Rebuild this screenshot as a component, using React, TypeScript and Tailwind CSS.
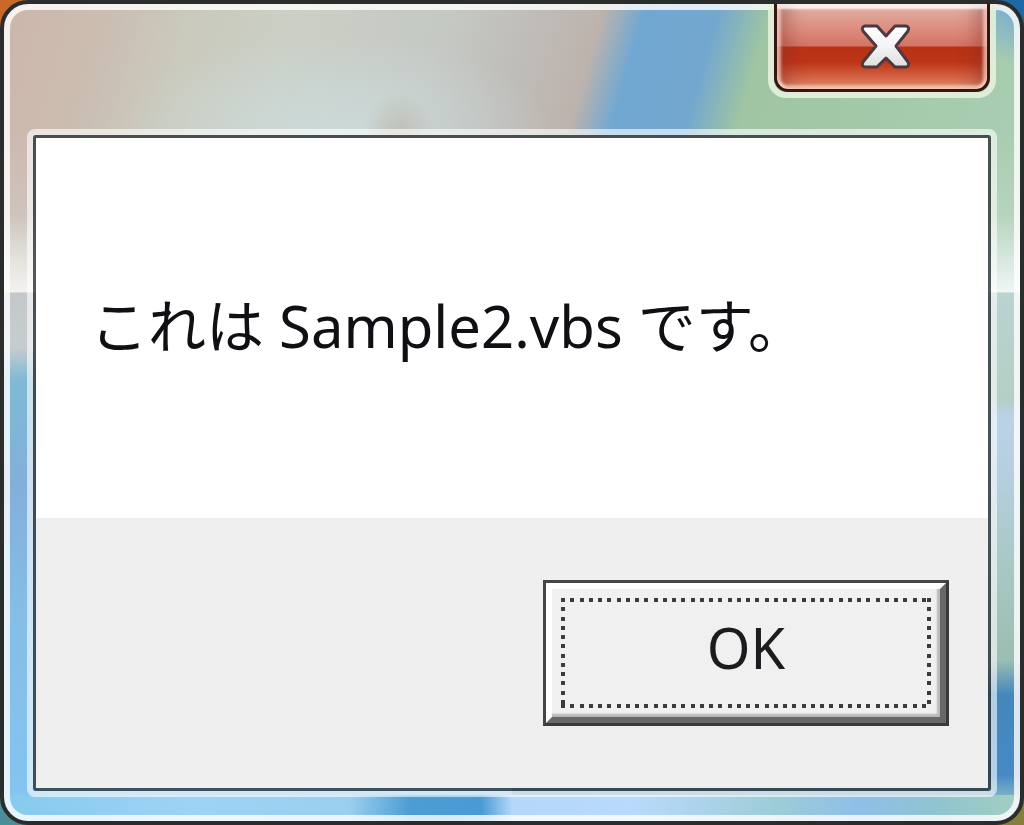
import React from "react";

function CloseGlyph() {
  return (
    <svg viewBox="0 0 54 50" className="h-[50px] w-[54px]" aria-hidden="true">
      <defs>
        <linearGradient id="glyph" x1="0" y1="0" x2="0" y2="1">
          <stop offset="0" stopColor="#ffffff" />
          <stop offset="0.5" stopColor="#f3f3f8" />
          <stop offset="1" stopColor="#e2dfd8" />
        </linearGradient>
      </defs>
      <path
        d="M6 4H18L27 14L36 4H47Q51 5 49 9L37 24L49 40Q51 44 47 45H36L27 36L18 45H6Q2 44 4 40L17 24L4 9Q2 5 6 4Z"
        fill="url(#glyph)"
        stroke="#4c3a40"
        strokeWidth="3"
        strokeLinejoin="round"
      />
    </svg>
  );
}

function TitleBar() {
  return (
    <header className="flex h-[119px] shrink-0 items-start justify-end pr-[18px]">
      <div className="-mt-1.5 rounded-b-[18px] border-x-[6px] border-b-[6px] border-[#e6f1dc]/90">
        <button
          type="button"
          aria-label="閉じる"
          className="flex h-[88px] w-[216px] items-center justify-center rounded-b-[14px] border-x-[3px] border-b-[3px] border-[#351512] bg-[linear-gradient(to_bottom,#f3d8d0_0,#e0a79d_8px,#dc8878_28px,#d37464_42px,#b93216_43px,#bd3516_58px,#d15f40_72px,#e08e70_85px)] pl-2 shadow-[inset_5px_0_3px_-1px_rgba(255,225,215,0.65),inset_-5px_0_3px_-1px_rgba(255,225,215,0.65),inset_0_-5px_3px_-1px_rgba(255,225,205,0.65),inset_0_6px_2px_-1px_rgba(255,255,255,0.75),inset_24px_0_20px_-14px_rgba(125,45,40,0.45),inset_-24px_0_20px_-14px_rgba(125,45,40,0.45)]"
        >
          <CloseGlyph />
        </button>
      </div>
    </header>
  );
}

function OkButton() {
  return (
    <button
      type="button"
      className="h-[146px] w-[406px] border-[3px] border-[#454545] border-r-[#3a3a3a] border-b-[#3a3a3a] bg-[#f0f0f0] font-['Noto_Sans','Noto_Sans_CJK_JP',sans-serif] text-[56px] leading-none text-[#1c1c20]"
    >
      <span className="flex h-full items-center justify-center border-[6px] border-t-white border-r-[#686868] border-b-[#686868] border-l-white shadow-[inset_-3px_-3px_2px_0_#b8b8b8]">
        <span className="flex h-[110px] w-[370px] items-center justify-center [background:repeating-linear-gradient(90deg,#3c3c3c_0_4px,transparent_4px_9px,#3c3c3c_9px_13px,transparent_13px_19px,#3c3c3c_19px_23px,transparent_23px_28px,#3c3c3c_28px_32px,transparent_32px_37px)_top/100%_4px_no-repeat,repeating-linear-gradient(90deg,#3c3c3c_0_4px,transparent_4px_9px,#3c3c3c_9px_13px,transparent_13px_19px,#3c3c3c_19px_23px,transparent_23px_28px,#3c3c3c_28px_32px,transparent_32px_37px)_bottom/100%_4px_no-repeat,repeating-linear-gradient(#3c3c3c_0_4px,transparent_4px_9px,#3c3c3c_9px_13px,transparent_13px_19px,#3c3c3c_19px_23px,transparent_23px_28px,#3c3c3c_28px_32px,transparent_32px_37px)_left/4px_100%_no-repeat,repeating-linear-gradient(#3c3c3c_0_4px,transparent_4px_9px,#3c3c3c_9px_13px,transparent_13px_19px,#3c3c3c_19px_23px,transparent_23px_28px,#3c3c3c_28px_32px,transparent_32px_37px)_right/4px_100%_no-repeat]">
          <span className="pb-3">OK</span>
        </span>
      </span>
    </button>
  );
}

export default function App() {
  return (
    <div className="flex min-h-screen [background:linear-gradient(#c8692a,#c8692a)_left_top/50%_50%_no-repeat,linear-gradient(#1c6aa5,#1c6aa5)_right_top/50%_50%_no-repeat,linear-gradient(#4a8f98,#4a8f98)_left_bottom/50%_50%_no-repeat,#84803c]">
      <div
        role="dialog"
        aria-describedby="message"
        className="flex flex-1 rounded-[28px] border-4 border-[#2b2d2d] bg-[#2b2d2d]"
      >
        <div className="flex flex-1 flex-col rounded-[24px] border-[6px] border-white/80 [background:radial-gradient(ellipse_70px_60px_at_100%_0,rgba(110,165,215,0.9),transparent)_right_top/120px_131px_no-repeat_border-box,radial-gradient(ellipse_36px_44px_at_396px_131px,rgba(190,188,178,0.9),transparent)_left_top/50%_131px_no-repeat_border-box,radial-gradient(ellipse_220px_100px_at_330px_131px,rgba(205,222,224,0.8),transparent)_left_top/58%_131px_no-repeat_border-box,linear-gradient(106deg,#cdb7ac_2%,#cbbdb1_10%,#cacabd_18%,#cbcfc5_28%,#c5c9c4_42%,#bfbcb8_51%,#bdb3ad_57%,#70a8d2_61%,#74a7cf_68%,#9fc5a2_73%,#a9cdb2_100%)_left_top/100%_131px_no-repeat_border-box,linear-gradient(90deg,#86caee_0,#9dd3f5_18%,#9bcff0_34%,#4b9dd3_40%,#4a9bd5_47%,#b5d7fa_50%,#b9dafb_62%,#9dccd8_76%,#8ebfe8_84%,#90c4d0_92%,#a3cfc0_100%)_left_bottom/100%_26px_no-repeat_border-box,linear-gradient(#cdb9af_0,#cdc4bd_80px,#e5e3de_125px,#f2f2ef_157px,#c3c8ca_158px,#c7cccf_212px,#7fb9d5_245px,#82b0da_350px,#85bde5_470px,#84c4f0_660px)_left_131px/50%_100%_no-repeat_border-box,linear-gradient(#a9cdb0_0,#b5d4bd_80px,#d8e8e0_125px,#f0f6f4_157px,#b9d4d1_158px,#b3cfc6_265px,#bad2e6_280px,#b5cfe0_340px,#a8c8c4_430px,#9cbdb2_525px,#4487bb_560px,#4789c5_640px,#8cc0c8_668px)_right_131px/50%_100%_no-repeat_border-box]">
          <TitleBar />
          <main className="mx-[17px] mb-[18px] flex flex-1 flex-col rounded-[8px] border-[6px] border-white/60">
            <div className="flex flex-1 flex-col rounded-[3px] border-[3px] border-[#2c3236]/80 bg-white bg-clip-padding">
              <div className="flex flex-1 items-center px-[54px] pt-10 pb-11">
                <p
                  id="message"
                  className="font-['Noto_Sans','Noto_Sans_CJK_JP',sans-serif] text-[58px] leading-none text-[#101014]"
                >
                  これは Sample2.vbs です。
                </p>
              </div>
              <footer className="flex justify-end bg-[#efefef] py-[62px] pr-[39px]">
                <OkButton />
              </footer>
            </div>
          </main>
        </div>
      </div>
    </div>
  );
}
